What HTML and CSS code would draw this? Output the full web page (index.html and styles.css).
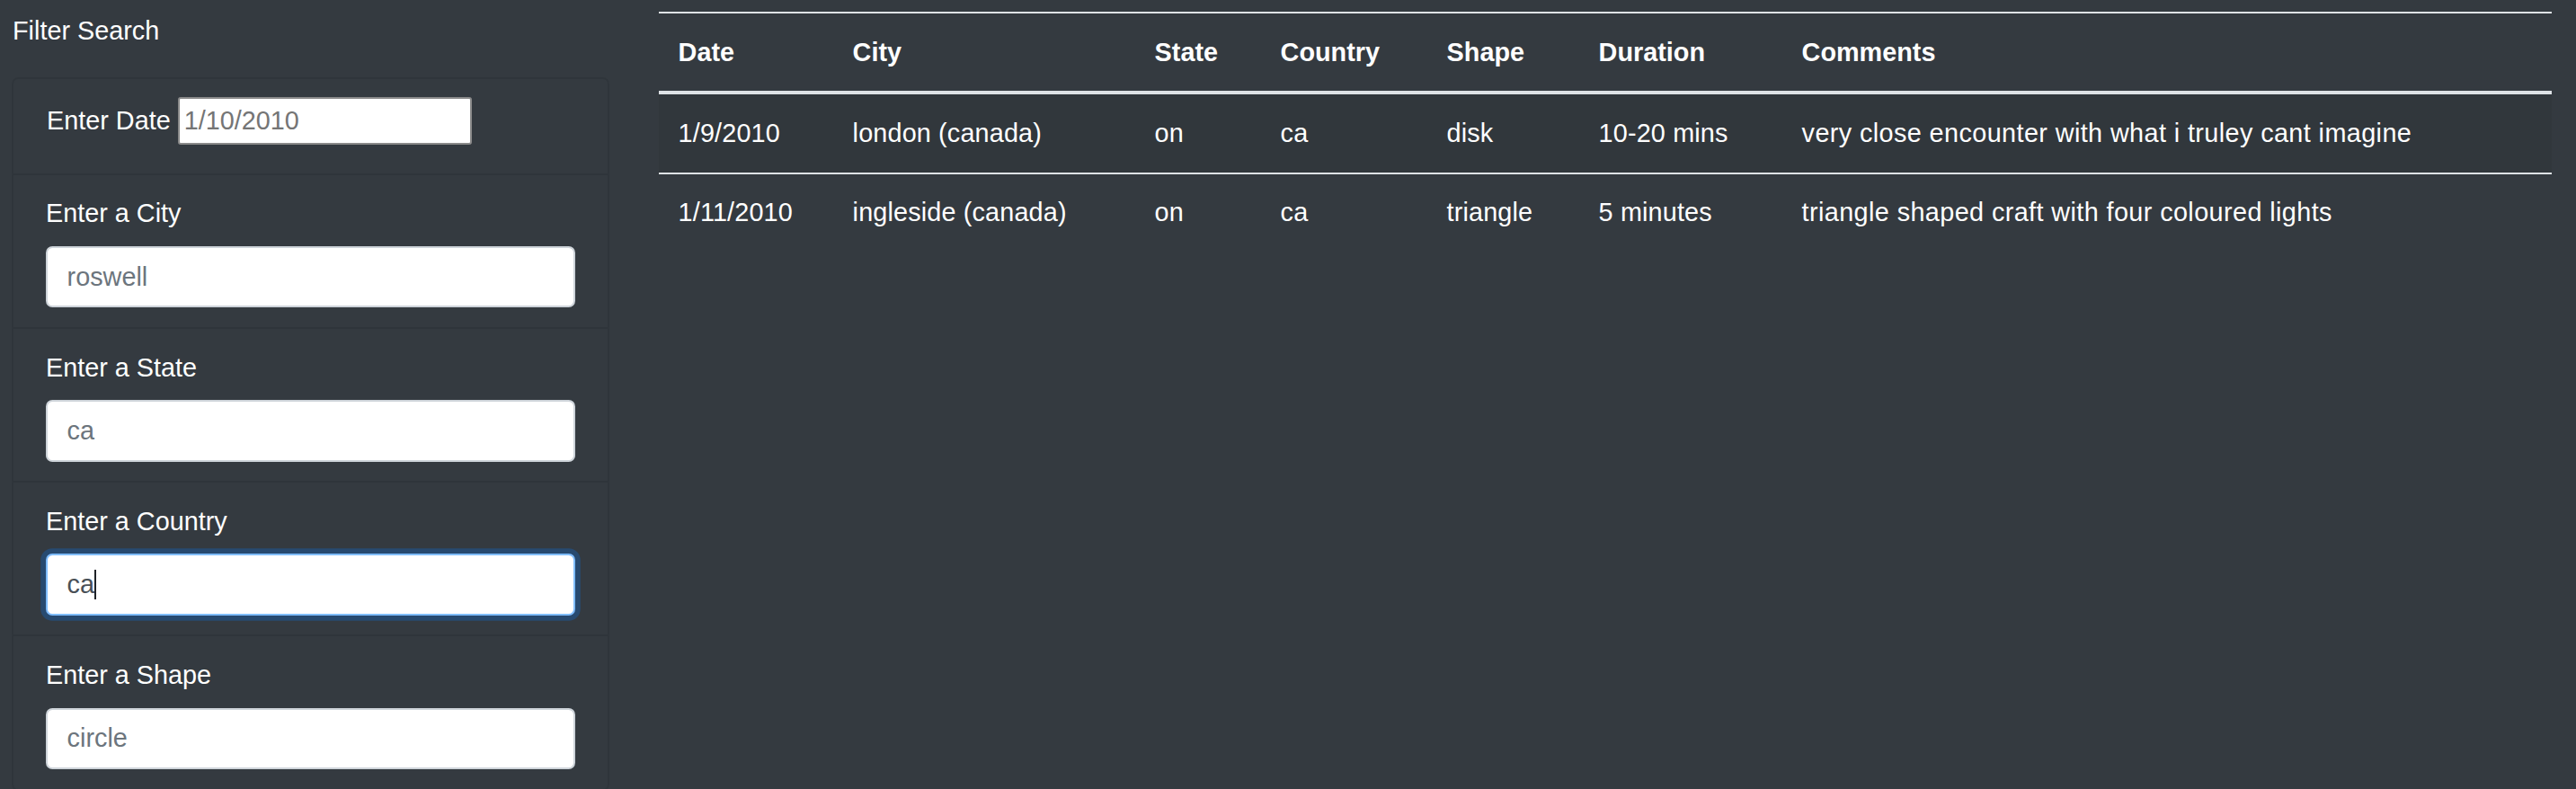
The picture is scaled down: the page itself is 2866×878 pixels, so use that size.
FILE: index.html
```html
<!DOCTYPE html>
<html lang="en">
<head>
<meta charset="utf-8">
<title>UFO Sightings</title>
<link rel="stylesheet" href="styles.css">
</head>
<body>
<div class="page">
  <aside class="sidebar">
    <div class="sidebar-title">Filter Search</div>
    <ul class="filter-card">
      <li class="filter-item filter-item-date">
        <label class="date-label" for="datetime">Enter Date</label>
        <input class="date-input" id="datetime" type="text" placeholder="1/10/2010">
      </li>
      <li class="filter-item">
        <label class="filter-label" for="city">Enter a City</label>
        <input class="form-control" id="city" type="text" placeholder="roswell">
      </li>
      <li class="filter-item">
        <label class="filter-label" for="state">Enter a State</label>
        <input class="form-control" id="state" type="text" placeholder="ca">
      </li>
      <li class="filter-item">
        <label class="filter-label" for="country">Enter a Country</label>
        <div class="input-wrap">
          <input class="form-control is-focused" id="country" type="text" value="ca">
          <span class="caret"></span>
        </div>
      </li>
      <li class="filter-item">
        <label class="filter-label" for="shape">Enter a Shape</label>
        <input class="form-control" id="shape" type="text" placeholder="circle">
      </li>
    </ul>
  </aside>
  <main class="results">
    <table class="ufo-table">
      <colgroup>
        <col class="col-date">
        <col class="col-city">
        <col class="col-state">
        <col class="col-country">
        <col class="col-shape">
        <col class="col-duration">
        <col class="col-comments">
      </colgroup>
      <thead>
        <tr>
          <th>Date</th>
          <th>City</th>
          <th>State</th>
          <th>Country</th>
          <th>Shape</th>
          <th>Duration</th>
          <th>Comments</th>
        </tr>
      </thead>
      <tbody>
        <tr class="striped">
          <td>1/9/2010</td>
          <td>london (canada)</td>
          <td>on</td>
          <td>ca</td>
          <td>disk</td>
          <td>10-20 mins</td>
          <td class="comment">very close encounter with what i truley cant imagine</td>
        </tr>
        <tr>
          <td>1/11/2010</td>
          <td>ingleside (canada)</td>
          <td>on</td>
          <td>ca</td>
          <td>triangle</td>
          <td>5 minutes</td>
          <td class="comment">triangle shaped craft with four coloured lights</td>
        </tr>
      </tbody>
    </table>
  </main>
</div>
</body>
</html>
```

FILE: styles.css
```css
* {
  box-sizing: border-box;
}

html, body {
  margin: 0;
  padding: 0;
}

body {
  background: #343a40;
  color: #ffffff;
  font-family: "Liberation Sans", Arial, sans-serif;
  font-size: 28.8px;
  line-height: 1.5;
  height: 878px;
  overflow: hidden;
}

.page {
  display: flex;
  align-items: flex-start;
  gap: 55px;
  padding: 13px 27px 0 13px;
}

.sidebar {
  width: 665px;
  flex: 0 0 665px;
}

.sidebar-title {
  line-height: 43.2px;
  margin-bottom: 29.5px;
  padding-left: 1px;
}

.filter-card {
  list-style: none;
  margin: 0;
  padding: 0;
  border: 2px solid rgba(0, 0, 0, 0.08);
  border-radius: 7.2px;
}

.filter-item {
  padding: 21.6px 36px;
  border-top: 2px solid rgba(0, 0, 0, 0.08);
}

.filter-item:first-child {
  border-top: none;
}

.filter-item-date {
  display: flex;
  align-items: baseline;
  gap: 8px;
  padding: 20.2px 36px 32px;
}

.date-label {
  line-height: 43.2px;
  padding-left: 1px;
}

.date-input {
  width: 327px;
  height: 53px;
  border: 2px solid #8a8a8a;
  border-radius: 3px;
  padding: 0 5px;
  background: #ffffff;
  color: #000000;
  font-family: inherit;
  font-size: 28.8px;
  line-height: normal;
  outline: none;
}

.date-input::placeholder {
  color: #757575;
  opacity: 1;
}

.filter-label {
  display: block;
  line-height: 43.2px;
  margin-bottom: 14.4px;
}

.form-control {
  display: block;
  width: 100%;
  height: 68.4px;
  padding: 10.8px 21.6px;
  border: 2px solid #ced4da;
  border-radius: 7.2px;
  background: #ffffff;
  color: #495057;
  font-family: inherit;
  font-size: 28.8px;
  line-height: 1.5;
  outline: none;
}

.form-control::placeholder {
  color: #6c757d;
  opacity: 1;
}

.form-control.is-focused {
  border-color: #80bdff;
  box-shadow: 0 0 0 5.76px rgba(0, 123, 255, 0.25);
}

.input-wrap {
  position: relative;
}

.caret {
  position: absolute;
  left: 54px;
  top: 18px;
  width: 2px;
  height: 33px;
  background: #1f2327;
}

.results {
  flex: 1 1 auto;
  min-width: 0;
}

.ufo-table {
  width: 100%;
  border-collapse: collapse;
  table-layout: fixed;
  color: #ffffff;
}

.col-date { width: 194px; }
.col-city { width: 336px; }
.col-state { width: 140px; }
.col-country { width: 185px; }
.col-shape { width: 169px; }
.col-duration { width: 226px; }
.col-comments { width: auto; }

.ufo-table th,
.ufo-table td {
  padding: 21.6px;
  text-align: left;
  vertical-align: top;
  line-height: 43.2px;
  border-top: 2px solid #dee2e6;
  white-space: nowrap;
}

.ufo-table td {
  letter-spacing: 0.15px;
}

.ufo-table td.comment {
  letter-spacing: 0.4px;
}

.ufo-table th {
  font-weight: bold;
  border-bottom: 4px solid #dee2e6;
}

.ufo-table tr.striped td {
  background: rgba(0, 0, 0, 0.05);
}
```
